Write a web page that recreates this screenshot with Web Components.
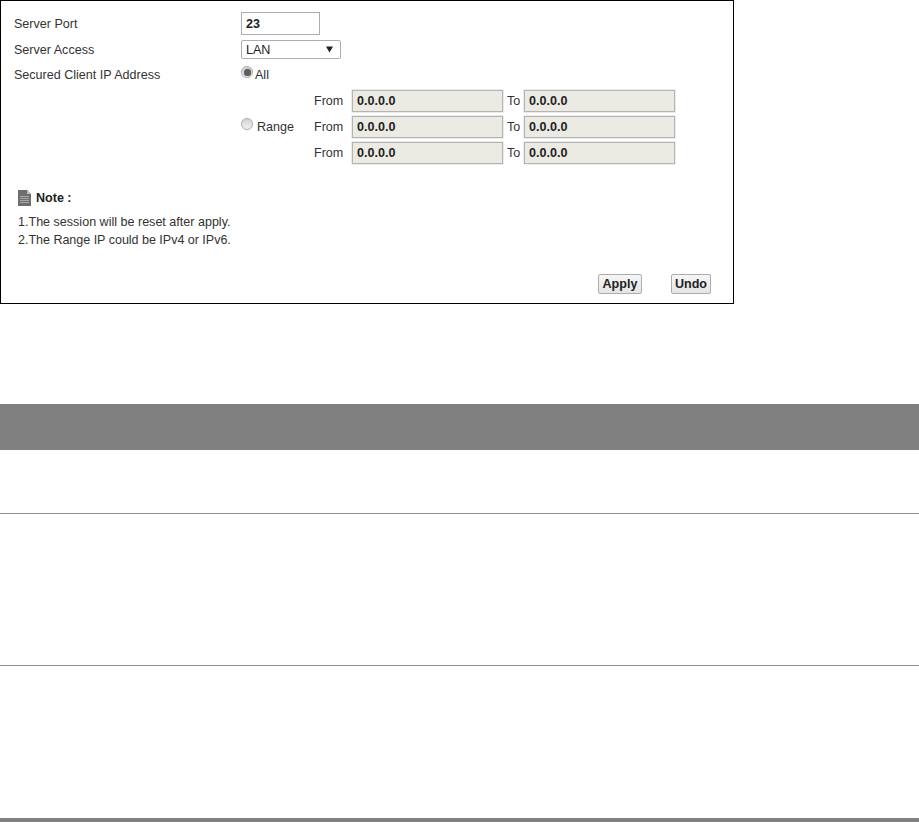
<!DOCTYPE html>
<html lang="en"><head><meta charset="utf-8"><title>Server settings</title>
<style>
html,body{margin:0;padding:0;background:#fff}
body{font:12.55px "Liberation Sans",Arial,sans-serif;color:#333;width:919px;height:822px;overflow:hidden}
</style></head><body>
<x-page>
  <x-panel>
    <x-field label="Server Port" style="--h:23px"><x-text-box value="23" style="width:79px;height:23px"></x-text-box></x-field>
    <x-field label="Server Access" style="--h:19px;margin-top:5px"><x-select value="LAN"></x-select></x-field>
    <x-field label="Secured Client IP Address" style="--h:20px;margin-top:6px"><x-radio checked tight>All</x-radio></x-field>
    <x-range-group></x-range-group>
    <x-note heading="Note :">
      <div>1.The session will be reset after apply.</div>
      <div style="letter-spacing:-.03px">2.The Range IP could be IPv4 or IPv6.</div>
    </x-note>
    <x-actions><x-btn style="width:44px">Apply</x-btn><x-btn style="width:40px">Undo</x-btn></x-actions>
  </x-panel>
  <x-doc-table></x-doc-table>
</x-page>
<script>
function def(name, css, html, init){
  customElements.define(name, class extends HTMLElement{
    constructor(){super();const r=this.attachShadow({mode:'open'});r.innerHTML='<style>'+css+'</style>'+(typeof html==='function'?html(this):html);}
    connectedCallback(){
      const r=this.shadowRoot;
      r.querySelectorAll('[data-attr]').forEach(e=>{e.textContent=this.getAttribute(e.dataset.attr)||''});
      if(init)init.call(this,r);
    }
  });
}
def('x-page',':host{display:flex;flex-direction:column;width:919px;height:822px}','<slot></slot>');
def('x-panel',':host{display:flex;flex-direction:column;box-sizing:border-box;width:734px;height:304px;border:1px solid #000;padding:11px 22px 9px 13px;flex:none}','<slot></slot>');
def('x-field',':host{display:grid;grid-template-columns:227px 1fr;align-items:center;height:var(--h)}.l{white-space:nowrap}.c{display:flex;align-items:center;height:100%}','<div class="l" data-attr="label"></div><div class="c"><slot></slot></div>');
def('x-text-box',':host{display:flex;align-items:center;box-sizing:border-box;border:1px solid #abadb3;padding:0 4px;font-weight:bold;color:#222;background:#fff}:host([disabled]){background:#ebebe4;border:1px solid #b4b4b4;box-shadow:0 0 0 .5px #d8d8d8}','<span data-attr="value"></span>');
def('x-select',':host{display:flex;align-items:center;justify-content:space-between;box-sizing:border-box;width:100px;height:19px;border:1px solid #abadb3;border-radius:2px;padding:0 7px 0 4px;color:#222;background:#fff}svg{display:block}','<span data-attr="value"></span><svg width="7" height="7" viewBox="0 0 7 7"><path d="M0 .5H7L3.5 6.5Z" fill="#222"/></svg>');
def('x-radio',':host{display:inline-flex;align-items:center;color:#333}.d{width:12px;height:12px;border-radius:50%;box-sizing:border-box;border:1px solid #b0b0b0;background:linear-gradient(#d2d2d2,#f2f2f2);box-shadow:0 0 1px #c8c8c8;display:flex;align-items:center;justify-content:center;flex:none;position:relative;top:-3px}:host([checked]) .d::after{content:"";width:7px;height:7px;border-radius:50%;background:#5e5e5e;box-shadow:0 0 1px #777}.t{margin-left:4px}:host([tight]) .t{margin-left:2px}','<span class="d"></span><span class="t"><slot></slot></span>');
def('x-range-group',':host{display:grid;grid-template-columns:73px 1fr;align-items:center;margin:5px 0 0 227px}.rows{display:grid;row-gap:4px}',()=>'<x-radio>Range</x-radio><div class="rows"><x-range-row></x-range-row><x-range-row></x-range-row><x-range-row></x-range-row></div>');
def('x-range-row',':host{display:grid;grid-template-columns:38px 151px 21px 151px;align-items:center;height:22px}.to{padding-left:4px}x-text-box{height:22px}','<span>From</span><x-text-box disabled value="0.0.0.0"></x-text-box><span class="to">To</span><x-text-box disabled value="0.0.0.0"></x-text-box>');
def('x-note',':host{display:block;margin:26px 0 0 4px;color:#333}.h{display:flex;align-items:center;gap:5px;height:16px;font-weight:bold;color:#222;margin-bottom:7px}svg{display:block;flex:none}.b{line-height:18px}','<div class="h"><svg width="13" height="16" viewBox="0 0 13 16"><path d="M0 0H9L13 4V16H0Z" fill="#6e6e6e"/><path d="M9 0L13 4H9Z" fill="#bdbdbd"/><path d="M2 6.5H11M2 8.5H11M2 10.5H11M2 12.5H11" stroke="#a8a8a8" stroke-width="1"/></svg><span data-attr="heading"></span></div><div class="b"><slot></slot></div>');
def('x-actions',':host{display:flex;justify-content:flex-end;gap:29px;margin-top:auto}','<slot></slot>');
def('x-btn',':host{display:flex;align-items:center;justify-content:center;box-sizing:border-box;height:20px;border:1px solid #adadad;border-radius:2px;background:linear-gradient(#f6f6f6,#e4e4e4);font-weight:bold;color:#222}','<slot></slot>');
def('x-doc-table',':host{display:grid;grid-template-rows:46px 64px 152px 152px 4px;margin-top:100px;width:919px;flex:none}.hd{background:#808080}.r{border-bottom:1px solid #8c8c8c;box-sizing:border-box}.r.last{border:0}.ft{background:#808080}','<div class="hd"></div><div class="r"></div><div class="r"></div><div class="r last"></div><div class="ft"></div>');
</script>
</body></html>
